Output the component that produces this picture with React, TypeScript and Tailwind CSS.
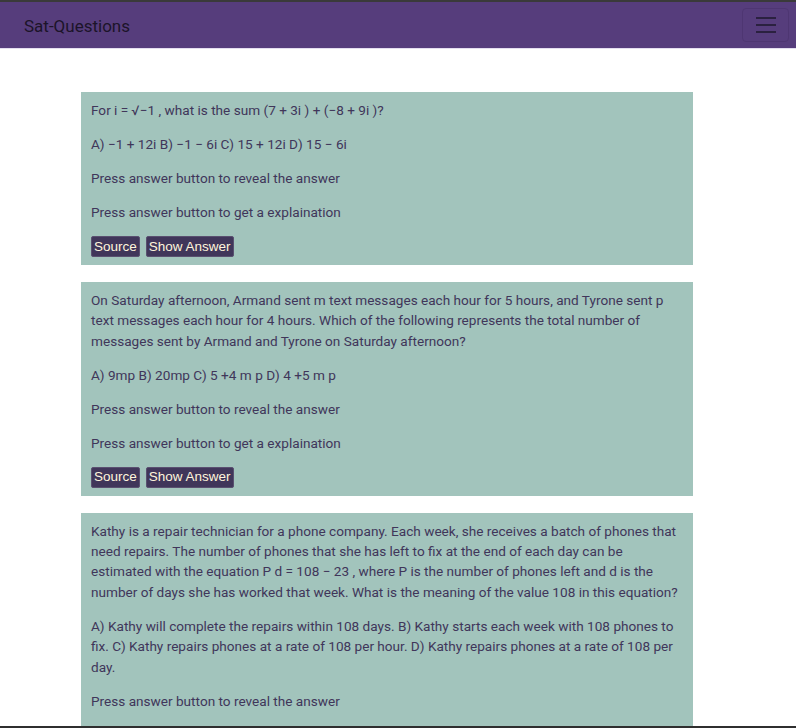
import React from 'react'

type Question = {
  text: string
  choices: string
}

const questions: Question[] = [
  {
    text: 'For i = √−1 , what is the sum (7 + 3i ) + (−8 + 9i )?',
    choices: 'A) −1 + 12i B) −1 − 6i C) 15 + 12i D) 15 − 6i',
  },
  {
    text: 'On Saturday afternoon, Armand sent m text messages each hour for 5 hours, and Tyrone sent p text messages each hour for 4 hours. Which of the following represents the total number of messages sent by Armand and Tyrone on Saturday afternoon?',
    choices: 'A) 9mp B) 20mp C) 5 +4 m p D) 4 +5 m p',
  },
  {
    text: 'Kathy is a repair technician for a phone company. Each week, she receives a batch of phones that need repairs. The number of phones that she has left to fix at the end of each day can be estimated with the equation P d = 108 − 23 , where P is the number of phones left and d is the number of days she has worked that week. What is the meaning of the value 108 in this equation?',
    choices: 'A) Kathy will complete the repairs within 108 days. B) Kathy starts each week with 108 phones to fix. C) Kathy repairs phones at a rate of 108 per hour. D) Kathy repairs phones at a rate of 108 per day.',
  },
]

const QuestionCard: React.FC<{ q: Question }> = ({ q }) => (
  <div className="w-[612px] bg-[#a2c4bc] px-[10px] pt-[8px] pb-[8px] text-[#40365a] text-[13.6px] leading-[1.5]">
    <p className="mb-[1em]">{q.text}</p>
    <p className="mb-[1em]">{q.choices}</p>
    <p className="mb-[1em]">Press answer button to reveal the answer</p>
    <p className="mb-[1em]">Press answer button to get a explaination</p>
    <div className="flex gap-[6px]">
      <button className="h-[21px] px-[2px] rounded-[2px] bg-[#40365a] border border-[#5a5070] text-[#fff5dc] text-[13.5px] leading-none font-['Liberation_Sans',Arial,sans-serif]">
        Source
      </button>
      <button className="h-[21px] px-[2px] rounded-[2px] bg-[#40365a] border border-[#5a5070] text-[#fff5dc] text-[13.5px] leading-none font-['Liberation_Sans',Arial,sans-serif]">
        Show Answer
      </button>
    </div>
  </div>
)

export default function App() {
  return (
    <div className="min-h-screen bg-white font-['Roboto',sans-serif]">
      <nav className="h-[49px] bg-[#563d7c] border-t-2 border-[#3a3a3a] border-b border-b-[#e4def0] flex items-center justify-between pl-[24px] pr-[7px]">
        <span className="pt-[3px] text-[17px] text-[#1c1429]">Sat-Questions</span>
        <button className="w-[47px] h-[34px] rounded-[4px] border border-[#4e3672] flex flex-col items-center justify-center gap-[5px]">
          <span className="block w-[20px] h-[2px] bg-[#2b2140]" />
          <span className="block w-[20px] h-[2px] bg-[#2b2140]" />
          <span className="block w-[20px] h-[2px] bg-[#2b2140]" />
        </button>
      </nav>
      <main className="pl-[81px] pt-[43px] flex flex-col gap-[17px] pb-10">
        {questions.map((q, i) => (
          <QuestionCard key={i} q={q} />
        ))}
      </main>
      <div className="fixed left-0 right-0 bottom-0 h-[2px] bg-[#2f2f2f]" />
    </div>
  )
}
